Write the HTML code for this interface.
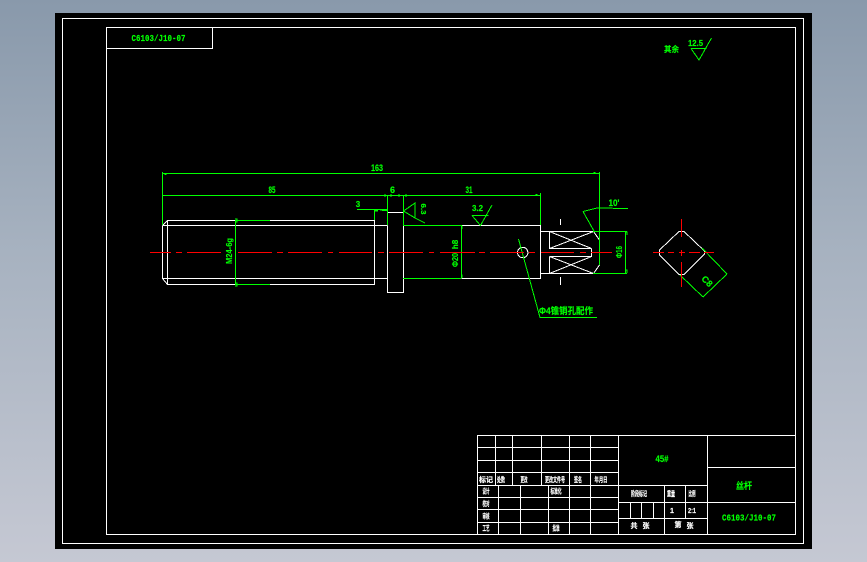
<!DOCTYPE html>
<html><head><meta charset="utf-8">
<style>
html,body{margin:0;padding:0;width:867px;height:562px;overflow:hidden;background:linear-gradient(180deg,#8999ab 0%,#a7b2c0 45%,#c5c8d3 100%)}
svg{position:absolute;left:0;top:0;display:block}
text{font-family:"Liberation Sans","Noto Sans CJK SC",sans-serif;font-size:8px;text-anchor:middle}
.g text{fill:#00ff00;font-weight:bold;stroke:#00ff00;stroke-width:.15}
.w text{fill:#fff;font-size:7px;font-weight:bold;stroke:#fff;stroke-width:.2}
.m{font-family:"Liberation Mono",monospace}
</style></head>
<body>
<svg width="867" height="562" viewBox="0 0 867 562" xmlns="http://www.w3.org/2000/svg">
<rect x="55" y="13" width="757" height="536" fill="#000"/>
<g fill="none" shape-rendering="crispEdges" stroke-width="1">
<!-- frames -->
<g stroke="#fff">
<rect x="62.5" y="18.5" width="741" height="525"/>
<rect x="106.5" y="27.5" width="689" height="507"/>
<rect x="106.5" y="27.5" width="106" height="21"/>
<!-- thread part -->
<path d="M167.5 220.5H374.5V284.5H167.5V220.5M162.5 225.5H387.5M162.5 278.5H387.5M162.5 225.5V278.5M162.5 225.5L167.5 220.5M162.5 278.5L167.5 284.5"/>
<!-- flange -->
<path d="M387.5 225.5V292.5H403.5V212.5H387.5"/>
<!-- shaft -->
<path d="M461.5 225.5H540.5V278.5H461.5"/>
<!-- end -->
<path d="M540.5 231.5H593.5M540.5 273.5H593.5M549.5 231.5V248.5H591.5M549.5 256.5V273.5M549.5 256.5H591.5V248.5"/>
<path d="M549.5 231.5L591.5 248.5M549.5 248.5L593.5 231.5M549.5 256.5L593.5 273.5M549.5 273.5L591.5 256.5"/>
<path d="M593.5 231.5L599.5 240V265L593.5 273.5"/>
<!-- ticks -->
<path d="M560.5 219V225M560.5 277V285"/>
<!-- diamond -->
<path d="M659.5 250L679 231.5H684L704.5 251V254L684 274.5H679L659.5 255Z"/>
<circle cx="522.7" cy="252.5" r="5.2"/>
</g>
<g stroke="#00ff00">
<path d="M162.5 172V225M162.5 173.5H600M163 195.5H540M540.5 193V225M599.5 172V265"/>
<path d="M235.5 220V284M235 220.5H270M235 284.5H270"/>
<path d="M357 209.5H387.5M374.5 209V220M387.5 195V225M403.5 195V225M403 225.5H461M403 278.5H461M461.5 225V278"/>
<path d="M593 231.5H627M593 273.5H627M625.5 231V273"/>
<!-- surface 6.3 -->
<path d="M403.5 211L415 203V218ZM415 218L425 223"/>
<!-- surface 3.2 -->
<path d="M472 215.5H488.5M472 215.5L480.5 225.5L492 205"/>
<!-- surface 12.5 -->
<path d="M691 48.5H706.5M691 48.5L699 60L711.5 38"/>
<!-- 10 deg -->
<path d="M583 211.5L597 208L628 208.5M583 211.5L594 231"/>
<!-- leader -->
<path d="M518.5 239L540 317.5H597"/>
<!-- diamond dims -->
<path d="M702 248L727 274M680 275L703 297M703 297L727 274"/>
<!-- ticks bold -->
<path d="M165 173V175M166 173V175M165 195V196M235 219H237V222H235M235 283H237V286H235M594 172V174M595 172V174M536 194V196M537 194V196M461 226H462V229M461 275H462V278M625 232H627V235M625 270H627V273"/>
<path d="M385 194V197M391 194V197M399 194V197M406 194V197M375 209V211H378M381 209V211"/>
<path d="M375 209.5H387M375 210.5H378M382 210.5H387"/>
</g>
<!-- centre lines -->
<path stroke="#f00" d="M150 252.5H171M176 252.5H182M187 252.5H221M238 252.5H272M277 252.5H283M288 252.5H322M328 252.5H333M339 252.5H372M378 252.5H384M389 252.5H423M429 252.5H434M440 252.5H475M479 252.5H485M490 252.5H524M529 252.5H535M541 252.5H574M580 252.5H586M591 252.5H612M653 252.5H664M668 252.5H674M679 252.5H685M689 252.5H700M704 252.5H714M681.5 219V237M681.5 250V256M681.5 262V287"/>
<!-- title block -->
<g stroke="#fff">
<rect x="477.5" y="435.5" width="318" height="99"/>
<path d="M477.5 447.5H618.5M477.5 460.5H618.5M477.5 472.5H618.5M477.5 485.5H664M477.5 497.5H618.5M477.5 509.5H618.5M477.5 522.5H618.5"/>
<path d="M495.5 435.5V485.5M512.5 435.5V485.5M541.5 435.5V485.5M569.5 435.5V534.5M590.5 435.5V534.5M618.5 435.5V534.5"/>
<path d="M498.5 485.5V534.5M520.5 485.5V534.5M548.5 485.5V534.5"/>
<path d="M707.5 435.5V534.5M707.5 467.5H795.5M618.5 485.5H707.5M618.5 502.5H795.5M618.5 518.5H707.5M664.5 485.5V534.5M685.5 485.5V518.5M630.5 502.5V518.5M641.5 502.5V518.5M653.5 502.5V518.5"/>
</g>
</g>
<g class="g">
<text x="158.5" y="41" class="m" textLength="54" lengthAdjust="spacingAndGlyphs" style="font-size:9px">C6103/J10-07</text>
<text x="671.5" y="52" textLength="15" lengthAdjust="spacingAndGlyphs" style="font-size:8px">其余</text>
<text x="695.5" y="46" textLength="15" lengthAdjust="spacingAndGlyphs">12.5</text>
<text x="377" y="171" textLength="12" lengthAdjust="spacingAndGlyphs" style="font-size:9px">163</text>
<text x="272" y="193" textLength="7" lengthAdjust="spacingAndGlyphs" style="font-size:9px">85</text>
<text x="392.5" y="193" style="font-size:9px">6</text>
<text x="358" y="207" style="font-size:8px">3</text>
<text x="469" y="193" textLength="7" lengthAdjust="spacingAndGlyphs" style="font-size:9px">31</text>
<text x="477.5" y="211" textLength="11" lengthAdjust="spacingAndGlyphs">3.2</text>
<text x="614" y="206" textLength="11" lengthAdjust="spacingAndGlyphs" style="font-size:9px">10'</text>
<text transform="translate(232,251) rotate(-90)" textLength="26" lengthAdjust="spacingAndGlyphs" style="font-size:8px">M24-6g</text>
<text transform="translate(421,209) rotate(90)" textLength="11" lengthAdjust="spacingAndGlyphs" style="font-size:7px">6.3</text>
<text transform="translate(458,244.5) rotate(-90)" style="font-size:8px">h8</text>
<text transform="translate(458,260) rotate(-90)" textLength="14" lengthAdjust="spacingAndGlyphs" style="font-size:8px">Φ20</text>
<text transform="translate(622,252) rotate(-90)" textLength="12" lengthAdjust="spacingAndGlyphs" style="font-size:8px">Φ16</text>
<text transform="translate(705,283.5) rotate(45)" style="font-size:9px">C8</text>
<text x="566" y="314" textLength="54" lengthAdjust="spacingAndGlyphs" style="font-size:9px">Φ4锥销孔配作</text>
<text x="662" y="462" textLength="13" lengthAdjust="spacingAndGlyphs" style="font-size:9px">45#</text>
<text x="744" y="489" textLength="16" lengthAdjust="spacingAndGlyphs" style="font-size:9px">丝杆</text>
<text x="749" y="520.5" class="m" textLength="54" lengthAdjust="spacingAndGlyphs" style="font-size:9px">C6103/J10-07</text>
</g>
<g class="w">
<text x="486" y="482">标记</text>
<text x="501" y="482" textLength="8" lengthAdjust="spacingAndGlyphs">处数</text>
<text x="524" y="482" textLength="7" lengthAdjust="spacingAndGlyphs">更改</text>
<text x="555" y="482" textLength="20" lengthAdjust="spacingAndGlyphs">更改文件号</text>
<text x="578" y="482" textLength="8" lengthAdjust="spacingAndGlyphs">签名</text>
<text x="601" y="482" textLength="13" lengthAdjust="spacingAndGlyphs">年月日</text>
<text x="486" y="493.5" textLength="7" lengthAdjust="spacingAndGlyphs">设计</text>
<text x="486" y="506" textLength="7" lengthAdjust="spacingAndGlyphs">校对</text>
<text x="486" y="518.5" textLength="7" lengthAdjust="spacingAndGlyphs">审核</text>
<text x="486" y="530.5" textLength="7" lengthAdjust="spacingAndGlyphs">工艺</text>
<text x="556" y="493.5" textLength="11" lengthAdjust="spacingAndGlyphs">标准化</text>
<text x="556" y="530.5" textLength="7" lengthAdjust="spacingAndGlyphs">批准</text>
<text x="639" y="496" textLength="16" lengthAdjust="spacingAndGlyphs">阶段标记</text>
<text x="671" y="496" textLength="8" lengthAdjust="spacingAndGlyphs">重量</text>
<text x="692" y="496" textLength="7" lengthAdjust="spacingAndGlyphs">比例</text>
<text x="672" y="513">1</text>
<text x="692" y="513" textLength="8" lengthAdjust="spacingAndGlyphs">2:1</text>
<text x="634" y="528">共</text>
<text x="646" y="528">张</text>
<text x="678" y="527">第</text>
<text x="690" y="528">张</text>
</g>
</svg>
</body></html>
